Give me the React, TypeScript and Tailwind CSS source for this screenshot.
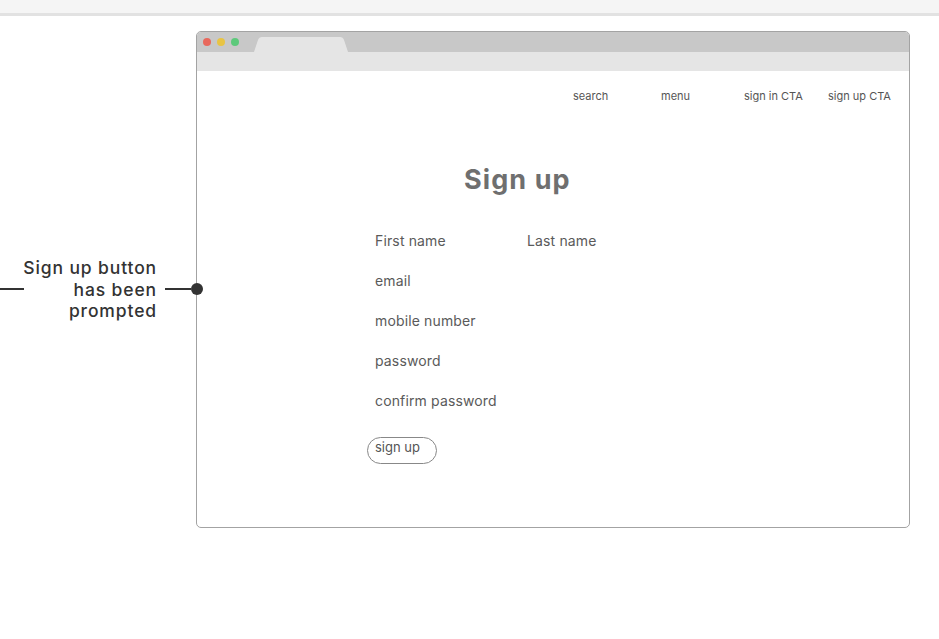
const FONT = { fontFamily: 'Inter, "Open Sans", sans-serif' };

function Annotation() {
  return (
    <div className="relative z-10 -mr-[7px] flex w-[203px] shrink-0 items-center pt-[241px]">
      <div className="-mr-[24px] h-[2px] w-[24px] shrink-0 bg-[#333]" />
      <div className="flex-1" />
      <div className="shrink-0 whitespace-nowrap pr-[8px] text-right text-[17.5px] font-medium leading-[21.5px] tracking-[0.05em] text-[#333]">
        Sign up button
        <br />
        has been
        <br />
        prompted
      </div>
      <div className="h-[2px] w-[26px] shrink-0 bg-[#333]" />
      <div className="h-[12px] w-[12px] shrink-0 rounded-full bg-[#333]" />
    </div>
  );
}

function TitleBar() {
  return (
    <div className="flex h-[20px] items-end bg-[#c8c8c8] pl-[6px]">
      <div className="flex h-full items-center gap-[6px]">
        <span className="h-[8px] w-[8px] rounded-full bg-[#e8685c]" />
        <span className="h-[8px] w-[8px] rounded-full bg-[#e8c444]" />
        <span className="h-[8px] w-[8px] rounded-full bg-[#5dc97b]" />
      </div>
      <svg width="94" height="15" viewBox="0 0 94 15" className="ml-[15px]">
        <path d="M0 15 L4 3 Q5 0 8 0 L86 0 Q89 0 90 3 L94 15 Z" fill="#e5e5e5" />
      </svg>
    </div>
  );
}

function Field({ label }: { label: string }) {
  return <div className="h-[40px] text-[14px] leading-[20px] tracking-[0.01em] text-[#5a5a5a]">{label}</div>;
}

function BrowserWindow() {
  return (
    <div className="mt-[15px] flex h-[497px] w-[714px] flex-col overflow-hidden rounded-[5px] border border-[#a3a3a3] bg-white">
      <TitleBar />
      <div className="h-[19px] bg-[#e5e5e5]" />
      <div className="flex pl-[376px] pt-[18px] text-[11px] leading-[14px] text-[#555]">
        <span className="w-[88px]">search</span>
        <span className="w-[83px]">menu</span>
        <span className="w-[84px]">sign in CTA</span>
        <span>sign up CTA</span>
      </div>
      <div className="pl-[267px] pt-[60px] text-[27px] font-bold leading-[34px] tracking-[0.04em] text-[#6f6f6f]">Sign up</div>
      <div className="pl-[178px] pt-[34px]">
        <div className="flex">
          <div className="w-[152px]">
            <Field label="First name" />
          </div>
          <Field label="Last name" />
        </div>
        <Field label="email" />
        <Field label="mobile number" />
        <Field label="password" />
        <Field label="confirm password" />
        <div className="-ml-[8px] mt-[6px] h-[27px] w-[70px] rounded-full border border-[#888] pl-[7px] pt-[1px] text-[13px] leading-[16px] text-[#555]">
          sign up
        </div>
      </div>
    </div>
  );
}

export default function App() {
  return (
    <div className="h-[639px] w-[939px] overflow-hidden bg-white" style={FONT}>
      <div className="h-[13px] bg-[#f5f5f5]" />
      <div className="h-[3px] bg-[#e2e2e2]" />
      <div className="flex items-start">
        <Annotation />
        <BrowserWindow />
      </div>
    </div>
  );
}
